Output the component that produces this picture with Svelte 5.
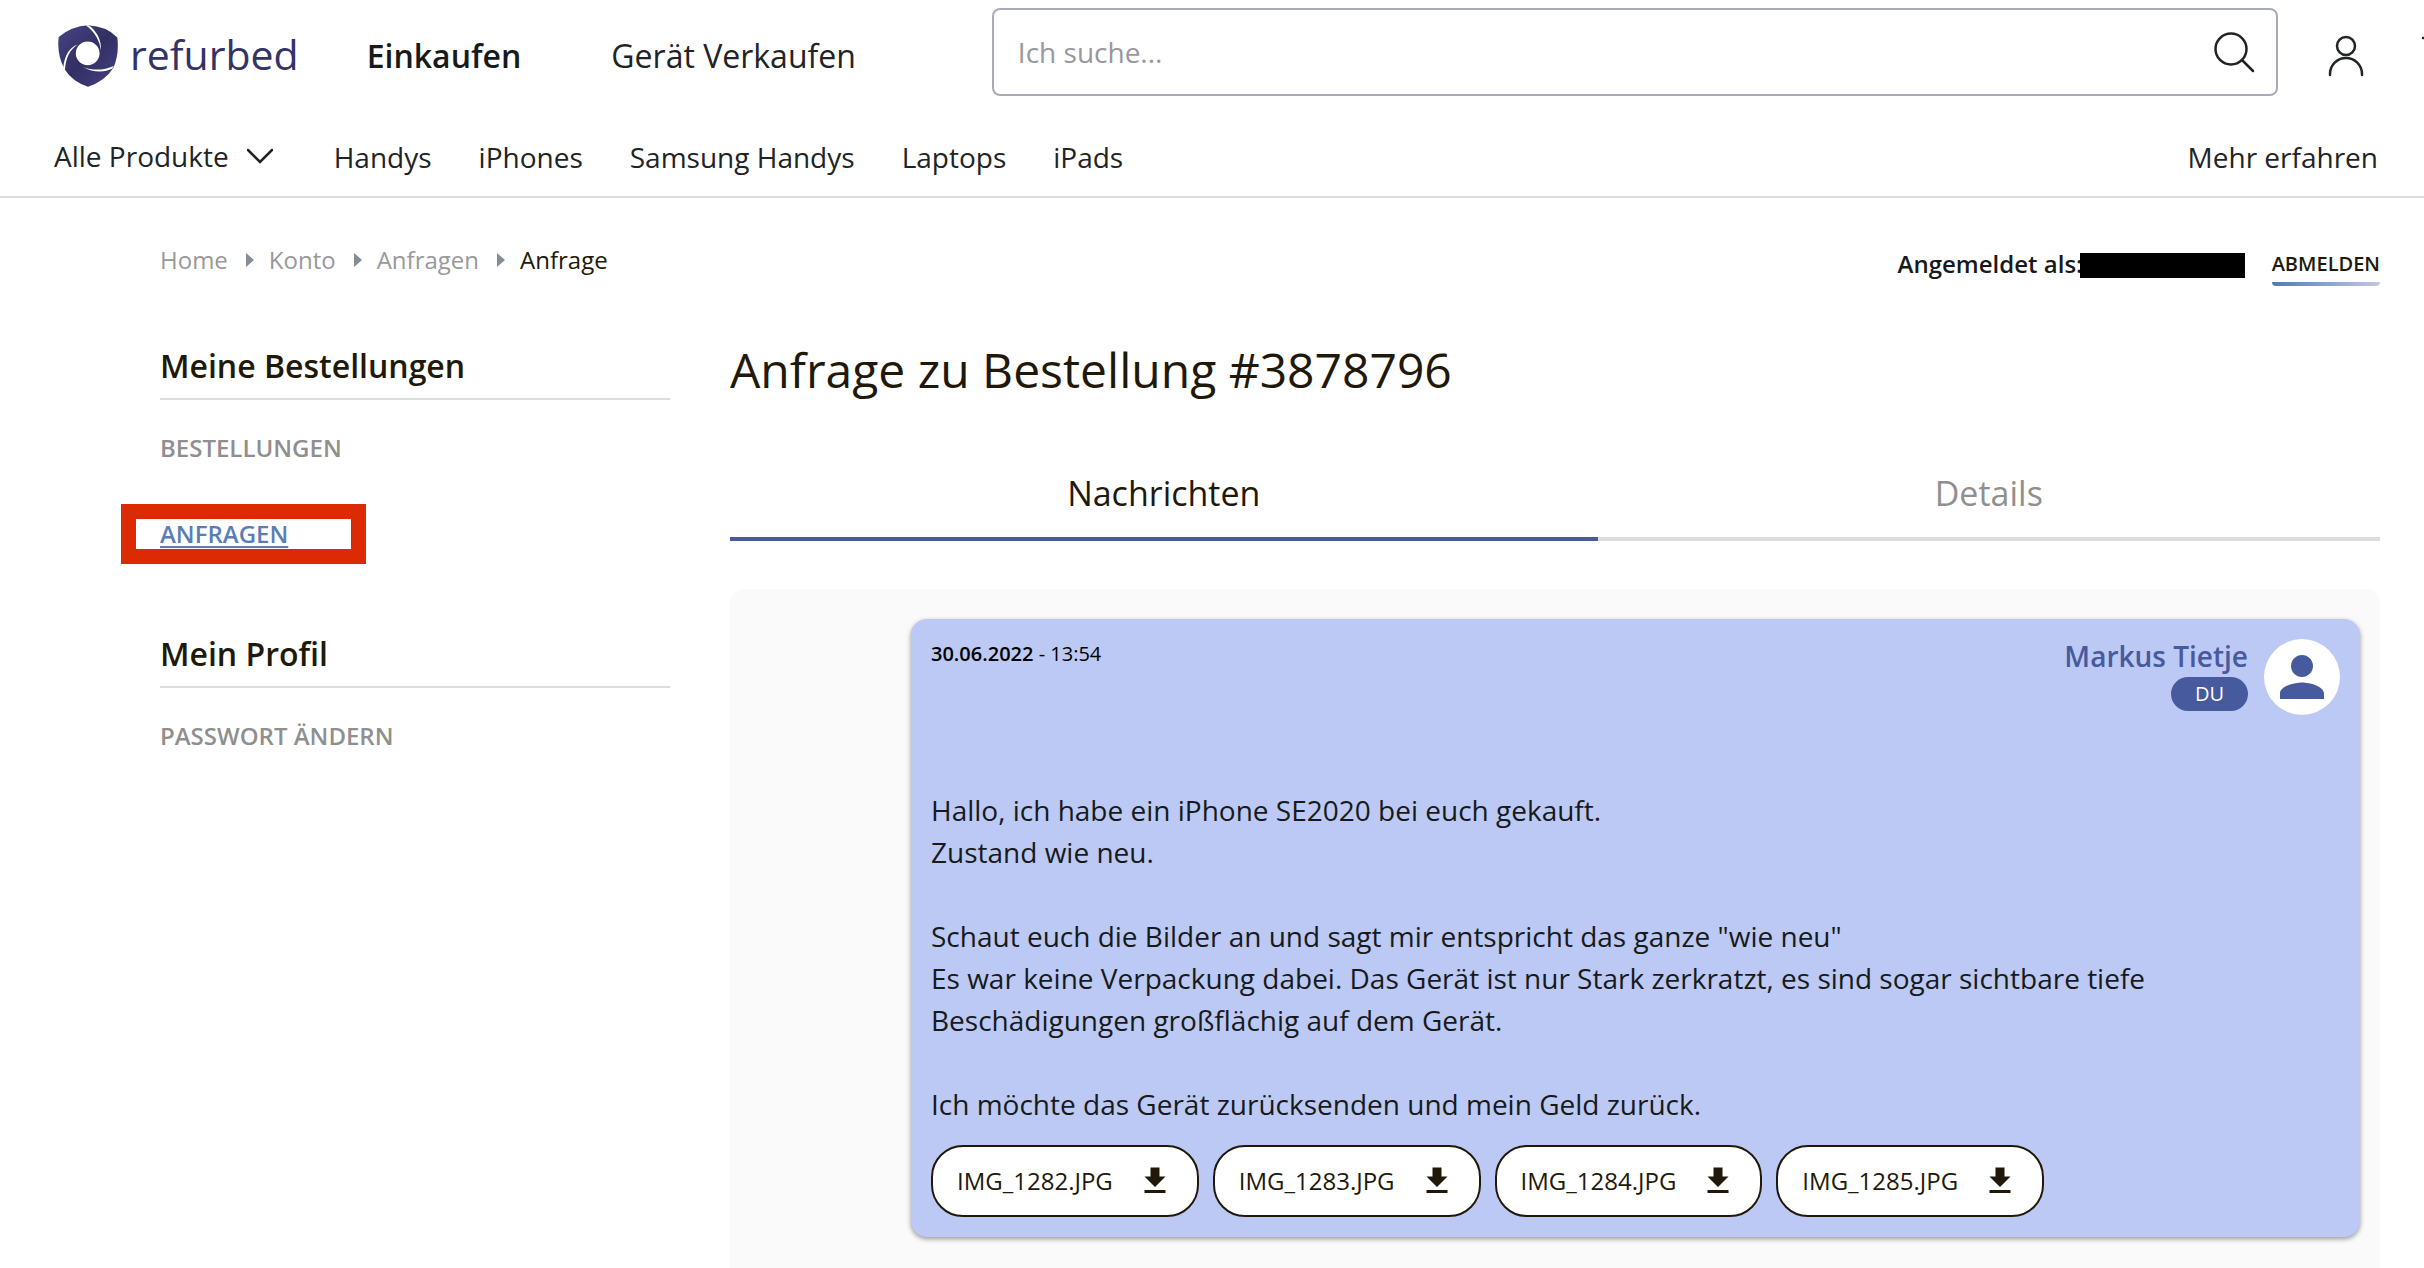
<script lang="ts">
  const categories = ["Handys", "iPhones", "Samsung Handys", "Laptops", "iPads"];
  const crumbs = ["Home", "Konto", "Anfragen"];
  const files = ["IMG_1282.JPG", "IMG_1283.JPG", "IMG_1284.JPG", "IMG_1285.JPG"];

  const message = `Hallo, ich habe ein iPhone SE2020 bei euch gekauft.
Zustand wie neu.

Schaut euch die Bilder an und sagt mir entspricht das ganze "wie neu"
Es war keine Verpackung dabei. Das Gerät ist nur Stark zerkratzt, es sind sogar sichtbare tiefe Beschädigungen großflächig auf dem Gerät.

Ich möchte das Gerät zurücksenden und mein Geld zurück.`;

  let search = $state("");
  let tab = $state("messages");
</script>

<div class="page">
  <header>
    <div class="top">
      <a class="logo" href="#home">
        <svg viewBox="54 45 182 186" aria-hidden="true">
          <defs>
            <linearGradient id="shield" x1="0" y1="0" x2="1" y2="1">
              <stop offset="0" stop-color="#474488" />
              <stop offset="0.5" stop-color="#312f62" />
              <stop offset="1" stop-color="#474488" />
            </linearGradient>
          </defs>
          <path
            fill="url(#shield)"
            d="M56 80Q96 48 145 45Q202 48 234 82Q240 134 222 174Q196 216 145 231Q98 216 74 178Q50 136 56 80Z"
          />
          <circle cx="144" cy="130" r="36" fill="#fff" />
          <path
            fill="#fff"
            d="M138 45L147 45C172 62 187 92 184 122C181 92 165 64 138 45ZM223 168L219 176C192 190 158 187 130 171C160 183 194 181 223 168ZM75 182L70 174C73 138 88 112 114 103C90 118 77 144 75 182Z"
          />
        </svg>
        <span>refurbed</span>
      </a>
      <nav class="modes" aria-label="Bereich">
        <a class="current" href="#buy">Einkaufen</a>
        <a href="#sell">Gerät Verkaufen</a>
      </nav>
      <form class="search" onsubmit={(e) => e.preventDefault()}>
        <input type="text" aria-label="Suche" placeholder="Ich suche..." bind:value={search} />
        <button aria-label="Suchen">
          <svg viewBox="0 0 44 44"><circle cx="19" cy="19" r="15.500" /><path d="M30 30l11 11" /></svg>
        </button>
      </form>
      <div class="actions">
        <a href="#account" aria-label="Konto">
          <svg viewBox="0 0 48 48"><circle cx="24" cy="14" r="9" /><path d="M8 43v-1a16 16 0 0 1 32 0v1" /></svg>
        </a>
        <a href="#cart" aria-label="Warenkorb">
          <svg viewBox="0 0 48 48"><path d="M5 6h7l6 26h20l5-20H14" /><circle cx="21" cy="40" r="3" /><circle cx="35" cy="40" r="3" /></svg>
        </a>
      </div>
    </div>
    <nav class="categories" aria-label="Kategorien">
      <button class="all">
        Alle Produkte
        <svg viewBox="0 0 26 16"><path d="M1 2l12 12L25 2" /></svg>
      </button>
      {#each categories as category (category)}
        <a href="#category">{category}</a>
      {/each}
      <a class="more" href="#more">Mehr erfahren</a>
    </nav>
  </header>

  <main>
    <div class="meta">
      <nav class="crumbs" aria-label="Breadcrumb">
        {#each crumbs as crumb (crumb)}
          <a href="#crumb">{crumb}</a>
          <svg viewBox="0 0 8 14" aria-hidden="true"><path d="M0 0l8 7-8 7z" /></svg>
        {/each}
        <span aria-current="page">Anfrage</span>
      </nav>
      <div class="session">
        <span class="user">Angemeldet als:</span>
        <span class="redacted"></span>
        <a class="logout" href="#logout">ABMELDEN</a>
      </div>
    </div>

    <div class="columns">
      <aside>
        <section>
          <h2>Meine Bestellungen</h2>
          <a href="#orders">BESTELLUNGEN</a>
          <a class="active" href="#tickets">ANFRAGEN</a>
        </section>
        <section>
          <h2>Mein Profil</h2>
          <a href="#password">PASSWORT ÄNDERN</a>
        </section>
      </aside>

      <div class="content">
        <h1>Anfrage zu Bestellung #3878796</h1>
        <div class="tabs" role="tablist">
          <button role="tab" aria-selected={tab === "messages"} onclick={() => (tab = "messages")}>Nachrichten</button>
          <button role="tab" aria-selected={tab === "details"} onclick={() => (tab = "details")}>Details</button>
        </div>

        <div class="thread">
          <article>
            <div class="head">
              <time datetime="2022-06-30T13:54"><b>30.06.2022</b> - 13:54</time>
              <div class="author">
                <span class="name">Markus Tietje</span>
                <span class="you">DU</span>
              </div>
              <div class="avatar">
                <svg viewBox="0 0 24 24" aria-hidden="true">
                  <path d="M12 12c2.210 0 4-1.790 4-4s-1.790-4-4-4-4 1.790-4 4 1.790 4 4 4zm0 2c-2.670 0-8 1.340-8 4v2h16v-2c0-2.660-5.330-4-8-4z" />
                </svg>
              </div>
            </div>
            <p>{message}</p>
            <div class="files">
              {#each files as file (file)}
                <a href="#file" download>
                  {file}
                  <svg viewBox="0 0 24 24" aria-hidden="true"><path d="M19 9h-4V3H9v6H5l7 7 7-7zM5 18v2h14v-2H5z" /></svg>
                </a>
              {/each}
            </div>
          </article>
        </div>
      </div>
    </div>
  </main>
</div>

<style>
  :global(body) {
    margin: 0;
    background: #fff;
  }

  .page {
    display: flex;
    flex-direction: column;
    min-height: 100vh;
    overflow: hidden;
    font-family: "Open Sans", "Noto Sans", sans-serif;
    font-size: 24px;
    line-height: 36px;
    color: #20190a;
  }

  a {
    color: inherit;
    text-decoration: none;
  }
  button,
  input {
    margin: 0;
    padding: 0;
    border: none;
    background: none;
    font: inherit;
    color: inherit;
  }
  button {
    cursor: pointer;
  }
  svg {
    display: block;
    flex: none;
  }

  /* header */
  header {
    border-bottom: 2px solid #ddd;
    font-size: 28px;
    color: #212425;
  }
  header svg {
    fill: none;
    stroke: currentColor;
    stroke-width: 2.5;
    stroke-linecap: round;
  }

  .top {
    display: flex;
    align-items: center;
    height: 112px;
    padding-left: 58px;
  }

  .logo {
    display: flex;
    align-items: center;
    gap: 12px;
    font-size: 41px;
    font-weight: 500;
    color: #343366;
  }
  .logo svg {
    width: 60px;
    height: 62px;
    stroke: none;
  }
  .logo span {
    padding-bottom: 4px;
  }

  .modes {
    display: flex;
    gap: 90px;
    margin: 0 136px 0 68px;
    font-size: 32px;
    white-space: nowrap;
  }
  .modes .current {
    font-weight: 600;
    color: #171a1b;
  }

  .search {
    display: flex;
    flex: 1;
    align-items: center;
    box-sizing: border-box;
    height: 88px;
    margin-bottom: 8px;
    padding: 0 20px 0 24px;
    border: 2px solid #a9abba;
    border-radius: 8px;
  }
  .search input {
    flex: 1;
    min-width: 0;
    outline: none;
  }
  .search input::placeholder {
    color: #98989d;
    opacity: 1;
  }
  .search svg {
    width: 44px;
    height: 44px;
  }

  .actions {
    display: flex;
    flex: none;
    gap: 48px;
    box-sizing: border-box;
    width: 146px;
    padding-left: 44px;
    overflow: hidden;
  }
  .actions svg {
    width: 48px;
    height: 48px;
  }

  .categories {
    display: flex;
    align-items: center;
    gap: 47px;
    box-sizing: border-box;
    height: 84px;
    padding: 6px 46px 0 54px;
    white-space: nowrap;
  }
  .all {
    display: flex;
    align-items: center;
    gap: 18px;
    margin: 0 14px 2px 0;
  }
  .all svg {
    width: 26px;
    height: 16px;
  }
  .more {
    margin-left: auto;
  }

  main {
    display: flex;
    flex: 1;
    flex-direction: column;
    padding: 44px 44px 0 160px;
  }

  .meta {
    display: flex;
    justify-content: space-between;
  }
  .crumbs {
    display: flex;
    align-items: center;
    gap: 15px;
    height: 36px;
  }
  .crumbs a {
    padding-right: 3px;
    color: #999;
  }
  .crumbs svg {
    width: 8px;
    height: 14px;
    fill: #848d96;
  }

  .session {
    display: flex;
    padding-top: 4px;
    font-weight: 600;
  }
  .user {
    color: #171a1b;
  }
  /* covers the tail of the label */
  .redacted {
    z-index: 1;
    width: 165px;
    height: 25px;
    margin: 7px 27px 0 -3px;
    background: #000;
  }
  .logout {
    font-size: 20px;
  }
  .logout::after {
    content: "";
    display: block;
    height: 4px;
    border-radius: 0 0 4px 4px;
    background: linear-gradient(90deg, #4e7cb8, #c5c6e6);
  }

  .columns {
    display: grid;
    flex: 1;
    grid-template-columns: 17fr 55fr;
    gap: 60px;
    margin-top: 48px;
  }

  /* sidebar */
  aside {
    display: flex;
    flex-direction: column;
    gap: 80px;
    padding-top: 10px;
  }
  section {
    display: flex;
    flex-direction: column;
    align-items: flex-start;
    gap: 50px;
    font-weight: 600;
    color: #8f8f8f;
  }
  h2 {
    align-self: stretch;
    margin: 0 0 -20px;
    padding-bottom: 10px;
    border-bottom: 2px solid #ddd;
    font-size: 32px;
    font-weight: 600;
    line-height: 44px;
    color: #20190a;
  }
  .active {
    position: relative;
    color: #5a7db8;
    text-decoration: underline;
    text-decoration-thickness: 2px;
    text-underline-offset: 3px;
  }
  /* marker frame drawn over the active entry */
  .active::after {
    content: "";
    position: absolute;
    top: -12px;
    left: -39px;
    box-sizing: border-box;
    width: 245px;
    height: 60px;
    border: 15px solid #db2a04;
  }

  .content {
    display: flex;
    flex-direction: column;
    min-width: 0;
  }
  h1 {
    margin: 0 0 63px;
    font-size: 48px;
    font-weight: 400;
    line-height: 72px;
  }

  .tabs {
    display: flex;
    margin-bottom: 48px;
  }
  .tabs button {
    flex: 1 1 auto;
    padding-bottom: 20px;
    border-bottom: 4px solid #ddd;
    font-size: 34px;
    line-height: 48px;
    color: #8f8f8f;
  }
  .tabs button[aria-selected="true"] {
    border-color: #485a9e;
    color: #20190a;
  }

  .thread {
    flex: 1;
    padding: 30px 20px;
    border-radius: 14px 14px 0 0;
    background: #fafafa;
  }
  article {
    box-sizing: border-box;
    width: 90%;
    margin-left: auto;
    padding: 20px;
    border-radius: 16px;
    background: #bcc9f4;
    box-shadow: 0 2px 5px rgba(0, 0, 0, 0.4);
  }

  .head {
    display: flex;
    align-items: flex-start;
  }
  time {
    margin-right: auto;
    font-size: 20px;
    line-height: 30px;
    color: #000;
  }
  time b {
    font-weight: 600;
  }
  .author {
    display: flex;
    flex-direction: column;
    align-items: flex-end;
    gap: 4px;
    margin-right: 16px;
    line-height: 34px;
    color: #485a9e;
  }
  .name {
    font-size: 28px;
    font-weight: 600;
  }
  .you {
    padding: 0 24px;
    border-radius: 17px;
    background: #485a9e;
    font-size: 20px;
    color: #fff;
  }
  .avatar {
    display: flex;
    align-items: center;
    justify-content: center;
    width: 76px;
    height: 76px;
    border-radius: 50%;
    background: #fff;
  }
  .avatar svg {
    width: 66px;
    height: 66px;
    fill: #485a9e;
  }

  p {
    margin: 74px 0 20px;
    font-size: 28px;
    line-height: 42px;
    color: #171a1b;
    white-space: pre-line;
  }

  .files {
    display: flex;
    flex-wrap: wrap;
    gap: 14px;
  }
  .files a {
    display: flex;
    align-items: center;
    gap: 24px;
    box-sizing: border-box;
    height: 72px;
    padding: 0 24px;
    border: 2px solid #20190a;
    border-radius: 32px;
    background: #fff;
  }
  .files svg {
    width: 36px;
    height: 36px;
    fill: currentColor;
  }
</style>
